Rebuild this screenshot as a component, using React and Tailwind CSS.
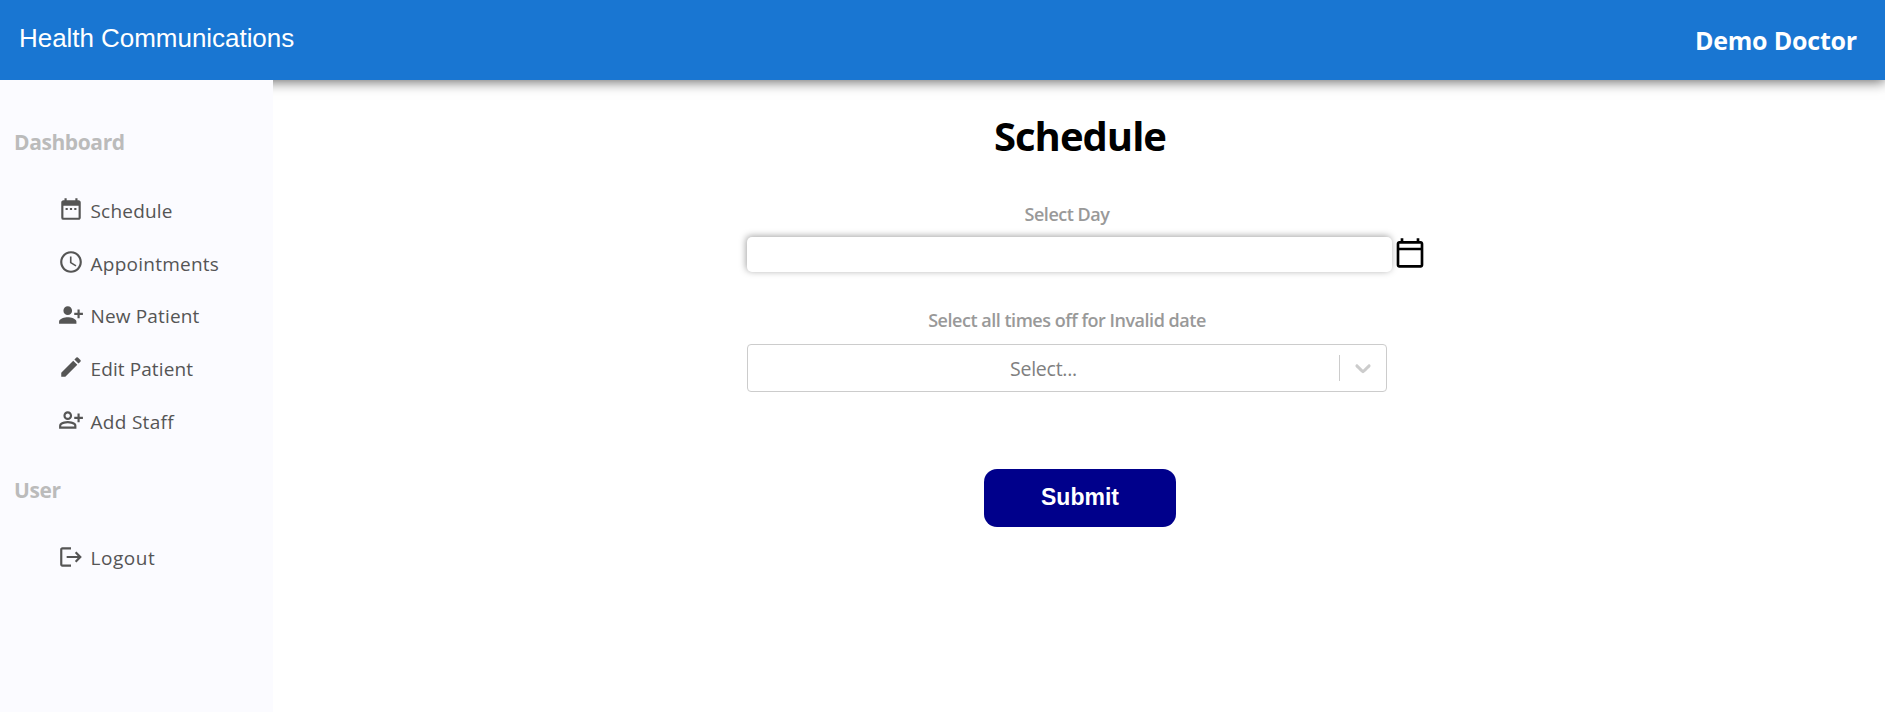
import { MdDateRange, MdAccessTime, MdPersonAddAlt1, MdEdit, MdOutlinePersonAddAlt, MdOutlineCalendarToday, MdLogout } from "react-icons/md";

const dashboard = [
  { label: "Schedule", Icon: MdDateRange, spacing: "tracking-[0.2px]" },
  { label: "Appointments", Icon: MdAccessTime, spacing: "tracking-[0.25px]" },
  { label: "New Patient", Icon: MdPersonAddAlt1, spacing: "tracking-[0.15px]" },
  { label: "Edit Patient", Icon: MdEdit, spacing: "tracking-[0.1px]" },
  { label: "Add Staff", Icon: MdOutlinePersonAddAlt, spacing: "tracking-[0.3px]" },
];

function Item({ label, Icon, spacing }) {
  return (
    <li className="flex h-[52.7px] items-center gap-[6.5px] pl-[58px]">
      <Icon className="mb-[2px] size-[26px] shrink-0" />
      <span className={"mt-px whitespace-nowrap text-[19px] leading-6 " + spacing}>{label}</span>
    </li>
  );
}

export default function App() {
  return (
    <div className="flex h-screen flex-col overflow-hidden bg-white font-['Open_Sans','Noto_Sans',sans-serif]">
      <header className="flex h-20 shrink-0 items-center justify-between bg-[#1976d2] pr-7 pl-[19px] text-white shadow-[0_2px_12px_rgba(0,0,0,0.58)]">
        <span className="mb-1 font-['Liberation_Sans',Arial,sans-serif] text-[26px] tracking-[-0.04px]">Health Communications</span>
        <span className="mt-[2px] text-[25px] font-bold tracking-[-0.2px]">Demo Doctor</span>
      </header>
      <div className="flex min-h-0 flex-1">
        <aside className="z-10 w-[273px] shrink-0 bg-[#fbfbff] text-[#555]">
          <h3 className="mt-[47px] pl-3.5 text-[21px] leading-[30px] font-bold tracking-[-0.4px] text-[#bbb]">Dashboard</h3>
          <ul className="mt-[27px]">
            {dashboard.map((item) => <Item key={item.label} {...item} />)}
          </ul>
          <h3 className="mt-7 pl-3.5 text-[21px] leading-[30px] font-bold tracking-[-0.4px] text-[#bbb]">User</h3>
          <ul className="mt-[26px]">
            <Item label="Logout" Icon={MdLogout} spacing="tracking-[0.55px]" />
          </ul>
        </aside>
        <main className="flex flex-1 flex-col items-center pl-[2px]">
          <h1 className="mt-7 text-[40px] leading-[56px] font-bold tracking-[-1px]">Schedule</h1>
          <label className="mt-[38px] mr-[26px] text-[18px] leading-6 font-semibold tracking-[-0.48px] text-[#999]">Select Day</label>
          <div className="mt-[11px] ml-[13px] flex h-[35px] items-start gap-[2px]">
            <input className="h-[35px] w-[645px] shrink-0 rounded-[5px] bg-white shadow-[-1px_-1px_7px_rgba(0,0,0,0.36)] outline-none" />
            <MdOutlineCalendarToday className="size-8 shrink-0" />
          </div>
          <label className="mt-[36px] mr-[26px] text-[18px] leading-6 font-semibold tracking-[-0.48px] text-[#999]">Select all times off for Invalid date</label>
          <div className="mt-3 mr-[26px] flex h-12 w-[640px] items-center rounded border border-[#ccc]">
            <span className="flex-1 pt-[2px] text-center text-[19.5px] tracking-[-0.25px] text-[#808080]">Select...</span>
            <span className="h-[26px] w-px bg-[#ccc]" />
            <svg viewBox="0 0 20 20" className="mx-2.5 size-[26px] fill-[#ccc]">
              <path d="M4.516 7.548c0.436-0.446 1.043-0.481 1.576 0l3.908 3.747 3.908-3.747c0.533-0.481 1.141-0.446 1.574 0 0.436 0.445 0.408 1.197 0 1.615-0.406 0.418-4.695 4.502-4.695 4.502-0.217 0.223-0.502 0.335-0.787 0.335s-0.57-0.112-0.789-0.335c0 0-4.287-4.084-4.695-4.502s-0.436-1.17 0-1.615z" />
            </svg>
          </div>
          <button className="mt-[77px] h-[58px] w-48 rounded-[13px] bg-[#00008b] pb-[2px] font-['Liberation_Sans',Arial,sans-serif] text-[23px] font-bold text-white">Submit</button>
        </main>
      </div>
    </div>
  );
}
